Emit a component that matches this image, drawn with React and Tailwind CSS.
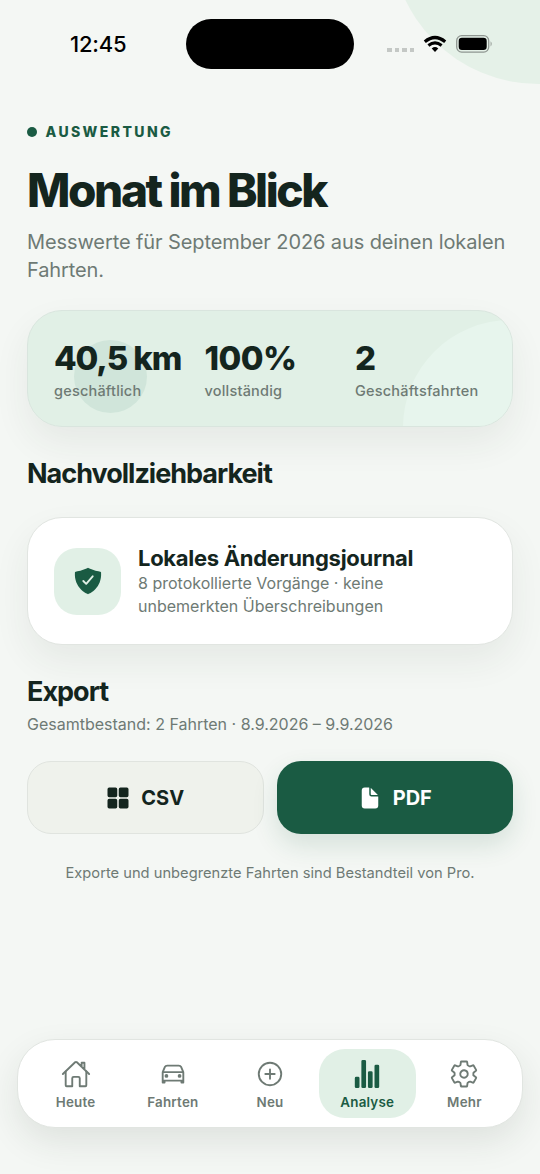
import React from "react";
import {
  IoHomeOutline,
  IoCarOutline,
  IoAddCircleOutline,
  IoStatsChart,
  IoSettingsOutline,
  IoShieldCheckmark,
  IoGrid,
  IoDocument,
} from "react-icons/io5";

const stats = [
  { value: "40,5 km", label: "geschäftlich", track: "tracking-[-1.1px]" },
  { value: "100%", label: "vollständig", track: "tracking-[-0.6px]" },
  { value: "2", label: "Geschäftsfahrten", track: "tracking-[-0.6px]" },
];

const tabs = [
  { label: "Heute", Icon: IoHomeOutline },
  { label: "Fahrten", Icon: IoCarOutline },
  { label: "Neu", Icon: IoAddCircleOutline },
  { label: "Analyse", Icon: IoStatsChart, active: true },
  { label: "Mehr", Icon: IoSettingsOutline },
];

function StatusBar() {
  return (
    <div className="relative flex h-[88px] items-center">
      <div className="ml-[70px] w-[116px] text-[22px] leading-none font-medium tracking-[-0.2px] text-black">12:45</div>
      <div className="mt-[-1px] h-[50px] w-[168px] rounded-full bg-black" />
      <div className="ml-[33px] flex items-center">
        <div className="mt-3 flex gap-[3px]">
          {[0, 1, 2, 3].map((i) => (
            <span key={i} className="h-[4px] w-[4.5px] bg-[#c4c8c5]" />
          ))}
        </div>
        <svg className="ml-[9px] h-[18px] w-[24px]" viewBox="0 0 24 18">
          <path d="M1.8 6.7Q12 -1.7 22.2 6.7" fill="none" stroke="#000" strokeWidth="3.2" />
          <path d="M5.4 10.5Q12 5.3 18.6 10.5" fill="none" stroke="#000" strokeWidth="3.1" />
          <path d="M8.7 13.4Q12 10.8 15.3 13.4L12 16.9Z" fill="#000" />
        </svg>
        <svg className="ml-[9px] h-[18px] w-[37px]" viewBox="0 0 37 18">
          <rect x="0.7" y="0.7" width="32" height="16.4" rx="5" fill="none" stroke="#8f9691" strokeWidth="1.3" />
          <rect x="2.7" y="2.8" width="28" height="12.2" rx="3.2" fill="#000" />
          <path d="M34.6 6.2q2.2 2.6 0 5.3z" fill="#8f9691" />
        </svg>
      </div>
    </div>
  );
}

export default function App() {
  return (
    <div className="relative flex h-[1174px] w-[540px] flex-col overflow-hidden bg-[#f4f7f4] font-['Inter',sans-serif] text-[#14251e]">
      <div className="absolute top-[-211px] left-[391px] h-[295px] w-[295px] rounded-full bg-[#e5f1e8]" />
      <StatusBar />

      <main className="relative flex flex-1 flex-col px-[27px] pt-[34px]">
        <div className="flex h-5 items-center gap-[9px] text-[#1a5b43]">
          <span className="h-[9.5px] w-[9.5px] rounded-full bg-[#1a5b43]" />
          <span className="text-[14px] leading-5 font-extrabold tracking-[2.4px]">AUSWERTUNG</span>
        </div>
        <h1 className="mt-[20px] h-[56px] text-[46px] leading-[56px] font-extrabold tracking-[-2.4px] whitespace-nowrap">Monat im Blick</h1>
        <p className="mt-[10px] text-[20px] leading-[28px] tracking-[-0.1px] text-[#6e7a74]">
          <span className="block whitespace-nowrap">Messwerte für September 2026 aus deinen lokalen</span>
          <span className="block">Fahrten.</span>
        </p>

        <section className="relative mt-[26px] h-[117px] overflow-visible rounded-[35px] shadow-[0_16px_36px_rgba(40,50,40,0.07)]">
          <div className="relative h-full overflow-hidden rounded-[35px] border border-[#d9e5de] bg-[#e1f0e6]">
            <div className="absolute top-[9px] left-[375px] h-[215px] w-[215px] rounded-full bg-[#e7f5ed]" />
            <div className="absolute top-[29px] left-[46px] h-[73px] w-[73px] rounded-full bg-[#d0e5da]" />
            <div className="relative grid grid-cols-[150.5px_150.5px_1fr] pt-[27px] pl-[26px]">
              {stats.map((s) => (
                <div key={s.label} className="whitespace-nowrap">
                  <div className={`h-[40px] text-[33px] leading-[40px] font-extrabold ${s.track}`}>{s.value}</div>
                  <div className="mt-[3px] text-[14.5px] leading-[20px] font-medium tracking-[0.2px] text-[#6e7a74]">{s.label}</div>
                </div>
              ))}
            </div>
          </div>
        </section>

        <h2 className="mt-[30px] h-[34px] text-[27px] leading-[34px] font-bold tracking-[-1px]">Nachvollziehbarkeit</h2>

        <section className="mt-[26px] flex h-[128px] items-center rounded-[35px] border border-[#e1e5e1] bg-white pl-[26px] shadow-[0_16px_36px_rgba(40,50,40,0.07)]">
          <div className="flex h-[67px] w-[67px] items-center justify-center rounded-[23px] bg-[#e1f0e6]">
            <IoShieldCheckmark className="h-[30px] w-[30px] text-[#1a5b43]" />
          </div>
          <div className="ml-[17px] whitespace-nowrap">
            <h3 className="h-[28px] text-[22px] leading-[28px] font-bold tracking-[-0.3px]">Lokales Änderungsjournal</h3>
            <p className="text-[16px] leading-[23px] text-[#6e7a74]">
              <span className="block">8 protokollierte Vorgänge · keine</span>
              <span className="block">unbemerkten Überschreibungen</span>
            </p>
          </div>
        </section>

        <h2 className="mt-[30px] h-[34px] text-[27px] leading-[34px] font-bold tracking-[-1px]">Export</h2>
        <p className="mt-[4px] h-[22px] text-[16px] leading-[22px] whitespace-nowrap text-[#6e7a74]">
          <span>Gesamtbestand: 2 Fahrten · 8.9.2026 – 9.9.2026</span>
        </p>

        <div className="mt-[26px] grid grid-cols-2 gap-[13px]">
          <button className="flex h-[73px] items-center justify-center gap-[11px] rounded-[24px] border border-[#e0e4df] bg-[#eff2ec] text-[20px] font-bold">
            <IoGrid className="h-[24px] w-[24px]" />
            <span>CSV</span>
          </button>
          <button className="flex h-[73px] items-center justify-center gap-[11px] rounded-[24px] bg-[#1a5b43] text-[20px] font-bold text-white shadow-[0_11px_26px_rgba(26,91,67,0.14)]">
            <IoDocument className="h-[24px] w-[24px]" />
            <span>PDF</span>
          </button>
        </div>

        <p className="mt-[28px] text-center text-[14.7px] leading-[22px] whitespace-nowrap text-[#6e7a74]">
          <span>Exporte und unbegrenzte Fahrten sind Bestandteil von Pro.</span>
        </p>
      </main>

      <nav className="relative mx-[17px] mb-[46px] flex h-[89px] rounded-[38px] border border-[#e1e5e1] bg-white px-[9px] py-[9px] shadow-[0_14px_34px_rgba(40,50,40,0.1)]">
        {tabs.map(({ label, Icon, active }) => (
          <div
            key={label}
            className={
              active
                ? "flex flex-1 flex-col items-center rounded-[26px] bg-[#e1f0e6] pt-[10px] text-[#1a5b43]"
                : "flex flex-1 flex-col items-center pt-[10px] text-[#6e7a74]"
            }
          >
            <Icon className="h-[30px] w-[30px]" />
            <span className="mt-[4px] text-[13.4px] leading-[18px] font-semibold tracking-[0.2px]">{label}</span>
          </div>
        ))}
      </nav>
    </div>
  );
}
